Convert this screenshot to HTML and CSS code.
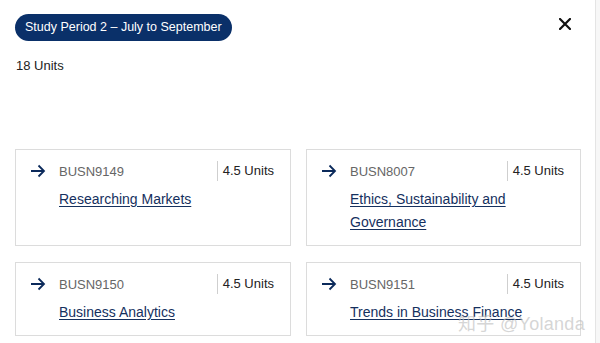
FILE: index.html
```html
<!DOCTYPE html>
<html lang="en">
<head>
<meta charset="utf-8">
<link rel="stylesheet" href="styles.css">
</head>
<body>
<div class="panel">
  <div class="top">
    <span class="pill">Study Period 2 – July to September</span>
    <button class="close" aria-label="Close">
      <svg width="12" height="12" viewBox="0 0 12 12"><path d="M1 1L11 11M11 1L1 11" stroke="#111" stroke-width="2.2" stroke-linecap="square"/></svg>
    </button>
  </div>
  <div class="total">18 Units</div>
  <div class="grid">
    <div class="card">
      <svg class="arrow" width="16" height="14" viewBox="0 0 16 14"><path d="M1 7H14M8.5 1.5L14 7L8.5 12.5" fill="none" stroke="#0b2a5b" stroke-width="1.8"/></svg>
      <div class="body">
        <div class="head"><span class="code">BUSN9149</span><span class="units">4.5 Units</span></div>
        <a class="title" href="#">Researching Markets</a>
      </div>
    </div>
    <div class="card">
      <svg class="arrow" width="16" height="14" viewBox="0 0 16 14"><path d="M1 7H14M8.5 1.5L14 7L8.5 12.5" fill="none" stroke="#0b2a5b" stroke-width="1.8"/></svg>
      <div class="body">
        <div class="head"><span class="code">BUSN8007</span><span class="units">4.5 Units</span></div>
        <a class="title" href="#">Ethics, Sustainability and Governance</a>
      </div>
    </div>
    <div class="card">
      <svg class="arrow" width="16" height="14" viewBox="0 0 16 14"><path d="M1 7H14M8.5 1.5L14 7L8.5 12.5" fill="none" stroke="#0b2a5b" stroke-width="1.8"/></svg>
      <div class="body">
        <div class="head"><span class="code">BUSN9150</span><span class="units">4.5 Units</span></div>
        <a class="title" href="#">Business Analytics</a>
      </div>
    </div>
    <div class="card">
      <svg class="arrow" width="16" height="14" viewBox="0 0 16 14"><path d="M1 7H14M8.5 1.5L14 7L8.5 12.5" fill="none" stroke="#0b2a5b" stroke-width="1.8"/></svg>
      <div class="body">
        <div class="head"><span class="code">BUSN9151</span><span class="units">4.5 Units</span></div>
        <a class="title" href="#">Trends in Business Finance</a>
      </div>
    </div>
  </div>
  <div class="watermark">知乎 @Yolanda</div>
</div>
</body>
</html>
```
FILE: styles.css
```css
* { box-sizing: border-box; }
html, body { margin: 0; padding: 0; }
body {
  width: 600px;
  height: 343px;
  overflow: hidden;
  background: #f7f7f7;
  font-family: "Liberation Sans", Arial, "Noto Sans CJK SC", sans-serif;
  color: #222;
}
.panel {
  position: relative;
  width: 596px;
  height: 343px;
  background: #fff;
  border-right: 1px solid #e4e4e4;
  padding: 14px 15px 0 15px;
}
.top {
  display: flex;
  justify-content: space-between;
  align-items: flex-start;
}
.pill {
  display: inline-block;
  background: #0a3069;
  color: #fff;
  font-size: 12.5px;
  line-height: 27px;
  height: 27px;
  padding: 0 10px;
  border-radius: 14px;
}
.close {
  background: none;
  border: 0;
  padding: 0;
  margin: 4px 9px 0 0;
  width: 12px;
  height: 12px;
  display: flex;
}
.total {
  margin-top: 17px;
  margin-left: 1px;
  font-size: 13px;
  line-height: 16px;
  color: #222;
}
.grid {
  margin-top: 75px;
  display: grid;
  grid-template-columns: 276px 275px;
  column-gap: 15px;
  row-gap: 16px;
}
.card {
  border: 1px solid #dcdcdc;
  display: flex;
  padding: 11px 16px 11px 14px;
}
.arrow {
  flex: none;
  margin-top: 3px;
  margin-right: 13px;
}
.body {
  flex: 1;
}
.head {
  display: flex;
  align-items: center;
  height: 20px;
}
.code {
  flex: 1;
  font-size: 13px;
  color: #666;
}
.units {
  border-left: 1px solid #cfcfcf;
  padding-left: 5px;
  height: 20px;
  line-height: 20px;
  font-size: 13px;
  color: #222;
}
.title {
  display: block;
  margin-top: 7px;
  font-size: 14px;
  line-height: 23px;
  color: #15305e;
  text-decoration: underline;
  text-underline-offset: 2px;
}
.watermark {
  position: absolute;
  left: 458px;
  top: 309px;
  font-size: 18px;
  color: rgba(190, 190, 190, 0.65);
  letter-spacing: 0.3px;
}
```
